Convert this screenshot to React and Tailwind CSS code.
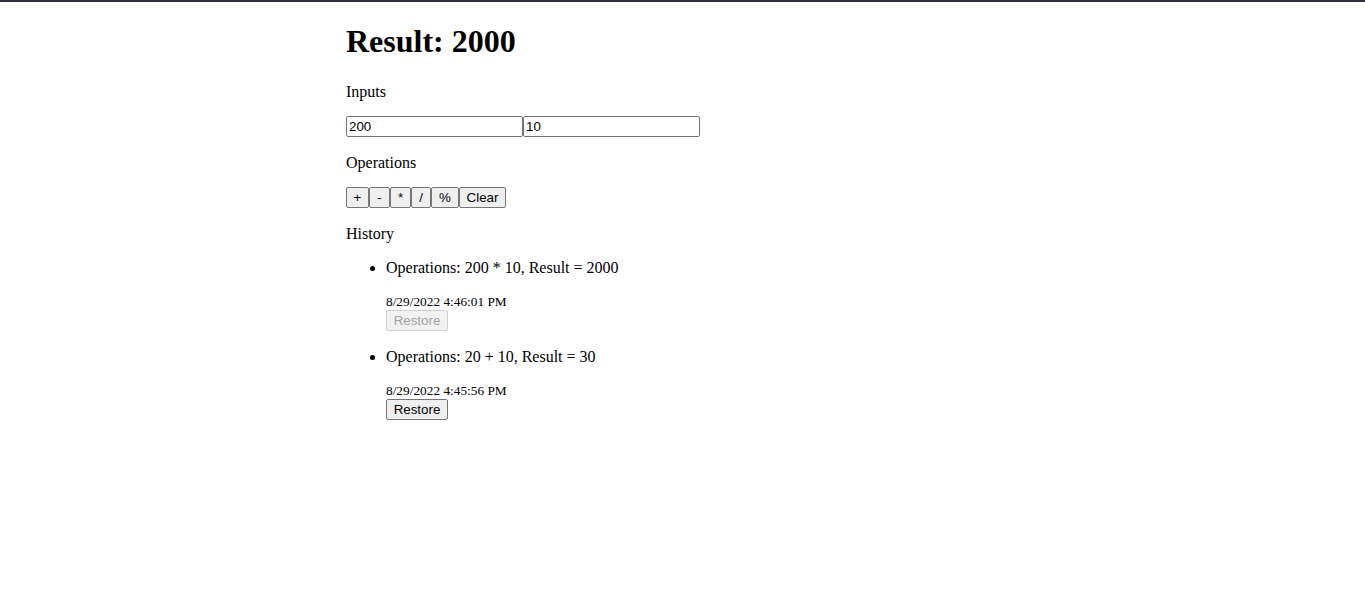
import React from 'react';

const btn =
  "h-[21px] px-[6px] border border-[#767676] rounded-[2px] bg-[#efefef] text-[13.33px] leading-none text-black font-['Liberation_Sans',Arial,sans-serif]";

const history = [
  { text: 'Operations: 200 * 10, Result = 2000', date: '8/29/2022 4:46:01 PM', disabled: true },
  { text: 'Operations: 20 + 10, Result = 30', date: '8/29/2022 4:45:56 PM', disabled: false },
];

export default function App() {
  return (
    <div className="min-h-screen bg-white text-black font-['Liberation_Serif','Times_New_Roman',serif] text-[16px]">
      <div className="h-[2px] bg-[#2f3142]" />

      <div className="pl-[346px]">
        <h1 className="text-[32px] font-bold leading-[37px] mt-[21px] mb-[22px]">Result: 2000</h1>

        <p className="leading-[18px] mt-4 mb-[15px] pt-[1px]">Inputs</p>
        <div className="flex">
          <input
            defaultValue="200"
            className="w-[177px] h-[21px] px-[2px] border border-[#767676] rounded-[2px] text-[13.33px] font-['Liberation_Sans',Arial,sans-serif]"
          />
          <input
            defaultValue="10"
            className="w-[177px] h-[21px] px-[2px] border border-[#767676] rounded-[2px] text-[13.33px] font-['Liberation_Sans',Arial,sans-serif]"
          />
        </div>

        <p className="leading-[18px] mt-4 mb-[15px] pt-[1px]">Operations</p>
        <div className="flex">
          <button className={btn + ' w-[23px]'}>+</button>
          <button className={btn + ' w-[21px]'}>-</button>
          <button className={btn + ' w-[21px]'}>*</button>
          <button className={btn + ' w-[20px]'}>/</button>
          <button className={btn + ' w-[28px]'}>%</button>
          <button className={btn + ' w-[47px]'}>Clear</button>
        </div>

        <p className="leading-[18px] mt-4 mb-[15px] pt-[1px]">History</p>
        <ul className="list-disc pl-10 mt-[15px]">
          {history.map((h, i) => (
            <li key={i} className="leading-[18px] mb-4 pt-[1px]">
              <div>{h.text}</div>
              <div className="mt-[17px] text-[13.33px] leading-[15px]">{h.date}</div>
              <button
                disabled={h.disabled}
                className={
                  "mt-[1px] w-[62px] h-[21px] border rounded-[2px] text-[13.33px] leading-none font-['Liberation_Sans',Arial,sans-serif] " +
                  (h.disabled
                    ? 'border-[#d0d0d0] bg-[#f2f2f2] text-[#a3a3a3]'
                    : 'border-[#767676] bg-[#efefef] text-black')
                }
              >
                Restore
              </button>
            </li>
          ))}
        </ul>
      </div>
    </div>
  );
}
